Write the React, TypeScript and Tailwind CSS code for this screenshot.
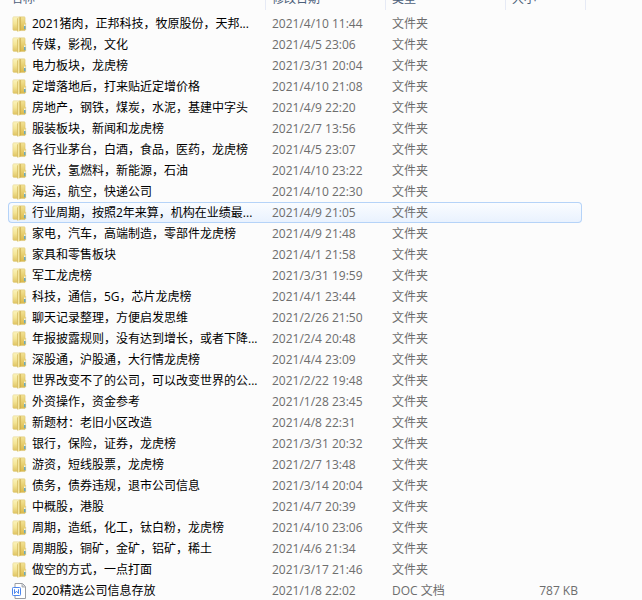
import { useState } from 'react'

type Entry = {
  name: string
  date: string
  type: string
  size?: string
}

const folder = (name: string, date: string): Entry => ({ name, date, type: '文件夹' })

const entries: Entry[] = [
  folder('2021猪肉，正邦科技，牧原股份，天邦...', '2021/4/10 11:44'),
  folder('传媒，影视，文化', '2021/4/5 23:06'),
  folder('电力板块，龙虎榜', '2021/3/31 20:04'),
  folder('定增落地后，打来贴近定增价格', '2021/4/10 21:08'),
  folder('房地产，钢铁，煤炭，水泥，基建中字头', '2021/4/9 22:20'),
  folder('服装板块，新闻和龙虎榜', '2021/2/7 13:56'),
  folder('各行业茅台，白酒，食品，医药，龙虎榜', '2021/4/5 23:07'),
  folder('光伏，氢燃料，新能源，石油', '2021/4/10 23:22'),
  folder('海运，航空，快递公司', '2021/4/10 22:30'),
  folder('行业周期，按照2年来算，机构在业绩最...', '2021/4/9 21:05'),
  folder('家电，汽车，高端制造，零部件龙虎榜', '2021/4/9 21:48'),
  folder('家具和零售板块', '2021/4/1 21:58'),
  folder('军工龙虎榜', '2021/3/31 19:59'),
  folder('科技，通信，5G，芯片龙虎榜', '2021/4/1 23:44'),
  folder('聊天记录整理，方便启发思维', '2021/2/26 21:50'),
  folder('年报披露规则，没有达到增长，或者下降...', '2021/2/4 20:48'),
  folder('深股通，沪股通，大行情龙虎榜', '2021/4/4 23:09'),
  folder('世界改变不了的公司，可以改变世界的公...', '2021/2/22 19:48'),
  folder('外资操作，资金参考', '2021/1/28 23:45'),
  folder('新题材：老旧小区改造', '2021/4/8 22:31'),
  folder('银行，保险，证券，龙虎榜', '2021/3/31 20:32'),
  folder('游资，短线股票，龙虎榜', '2021/2/7 13:48'),
  folder('债务，债券违规，退市公司信息', '2021/3/14 20:04'),
  folder('中概股，港股', '2021/4/7 20:39'),
  folder('周期，造纸，化工，钛白粉，龙虎榜', '2021/4/10 23:06'),
  folder('周期股，铜矿，金矿，铝矿，稀土', '2021/4/6 21:34'),
  folder('做空的方式，一点打面', '2021/3/17 21:46'),
  { name: '2020精选公司信息存放', date: '2021/1/8 22:02', type: 'DOC 文档', size: '787 KB' },
]

const columns = ['名称', '修改日期', '类型', '大小']

// Shared gradients for all the folder icons
function IconDefs() {
  return (
    <svg className="absolute size-0" aria-hidden="true">
      <defs>
        <linearGradient id="folder-left" x1="0" y1="0" x2="0" y2="1">
          <stop offset="0" stopColor="#fbf4bd" />
          <stop offset="0.5" stopColor="#f3e495" />
          <stop offset="1" stopColor="#dfc463" />
        </linearGradient>
        <linearGradient id="folder-fold" x1="0" y1="0" x2="1" y2="0">
          <stop offset="0" stopColor="#cdb052" />
          <stop offset="0.4" stopColor="#f6e9a4" />
          <stop offset="1" stopColor="#c4a240" />
        </linearGradient>
        <linearGradient id="folder-right" x1="0" y1="0" x2="0" y2="1">
          <stop offset="0" stopColor="#f2e294" />
          <stop offset="1" stopColor="#dbb948" />
        </linearGradient>
      </defs>
    </svg>
  )
}

function FolderIcon() {
  return (
    <svg viewBox="0 0 16 16" className="size-4 shrink-0" aria-hidden="true">
      <path d="M7 .8h5.4l.7.6v5l.6.8v6.6l-.8.8H7z" fill="url(#folder-right)" stroke="#d3b85d" strokeWidth="0.4" />
      <path d="M.8 1.5 1.6.8h5v13.6H1.6l-.8-.7z" fill="url(#folder-left)" stroke="#dcc779" strokeWidth="0.4" />
      <path d="M5.2 2.6 8.6 1v13.2l-1.6 1.4H5.2z" fill="url(#folder-fold)" />
      <path d="M12.2 10h1.2v3.2h-1.2z" fill="#4fa3d8" />
      <path d="M12.2 8.6h1.2V10h-1.2z" fill="#f4fbff" />
    </svg>
  )
}

function DocIcon() {
  return (
    <svg viewBox="0 0 16 16" className="size-4 shrink-0" aria-hidden="true">
      <path d="M3 .5h7.5l3 3v12H3z" fill="#fff" stroke="#9a9da3" strokeWidth="1" strokeLinejoin="round" />
      <path d="M10 .8v3.2h3.3" fill="#d4d6da" stroke="#9a9da3" strokeWidth="0.8" />
      <rect x="0.5" y="4.5" width="8" height="8" rx="0.8" fill="#fff" stroke="#4c86ee" strokeWidth="1" />
      <path d="M2.5 6.3v4.2l2-2.3 2 2.3V6.3" fill="none" stroke="#4c86ee" strokeWidth="1" />
    </svg>
  )
}

export default function App() {
  const [selected, setSelected] = useState(9)

  return (
    <main
      lang="zh-CN"
      className="h-screen overflow-hidden bg-[#fcfcfc] pl-2 pr-14 text-xs text-[#6d6d6d] font-['Open_Sans','Noto_Sans_CJK_SC',sans-serif]"
    >
      <IconDefs />
      {/* the list is scrolled a little, so the header is only partly visible */}
      <table className="-mt-3 w-full table-fixed border-separate border-spacing-0">
        <colgroup>
          <col />
          <col className="w-[120px]" />
          <col className="w-[120px]" />
          <col className="w-[76px]" />
          <col className="w-1" />
        </colgroup>
        <thead>
          <tr className="text-[#4c607a]">
            {columns.map((c, i) => (
              <th key={c} colSpan={i === 3 ? 2 : 1} className="h-[25px] p-0 text-left align-top font-normal">
                <div className="flex h-[22px] border-r border-[#e6eaf5]">
                  <button type="button" className={i === 0 ? 'px-[3px]' : 'px-1.5'}>{c}</button>
                </div>
              </th>
            ))}
          </tr>
        </thead>
        <tbody>
          {entries.map((e, i) => {
            const active = i === selected
            const cell = active
              ? 'h-[21px] border-y border-[#b5d3f8] bg-linear-to-b from-[#fafcff] to-[#e9f2fe] py-0'
              : 'h-[21px] border-y border-transparent py-0'
            return (
              <tr key={e.name} onClick={() => setSelected(i)}>
                <td className={`${cell} rounded-l-sm border-l pl-[3px]`}>
                  <div className="flex h-[19px] items-center gap-1 whitespace-nowrap text-black">
                    {e.size ? <DocIcon /> : <FolderIcon />}
                    <span>{e.name}</span>
                  </div>
                </td>
                <td className={`${cell} whitespace-nowrap pl-1.5`}>{e.date}</td>
                <td className={`${cell} whitespace-nowrap pl-1.5`}>{e.type}</td>
                <td className={`${cell} whitespace-nowrap rounded-r-sm border-r pr-[3px] text-right`}>{e.size}</td>
                <td className="p-0" />
              </tr>
            )
          })}
        </tbody>
      </table>
    </main>
  )
}
